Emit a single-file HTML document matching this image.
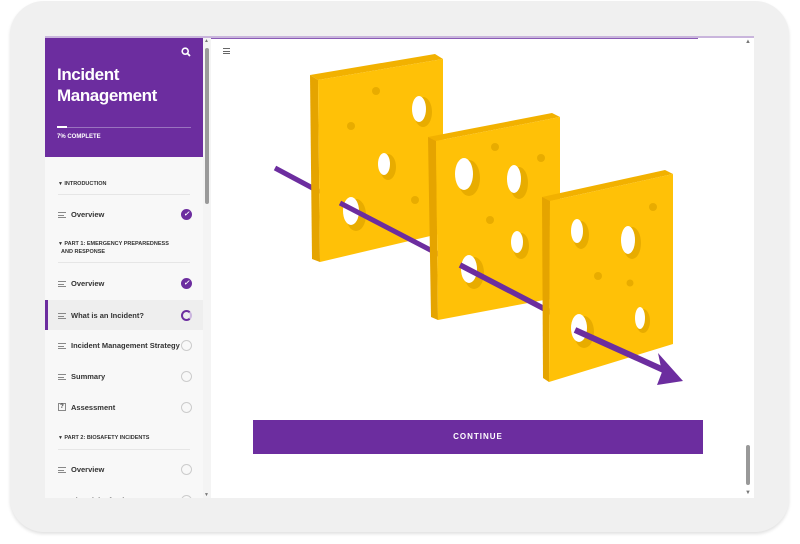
<!DOCTYPE html>
<html><head><meta charset="utf-8"><style>
*{margin:0;padding:0;box-sizing:border-box}
body{width:800px;height:544px;background:#fff;position:relative;overflow:hidden;font-family:"Liberation Sans",sans-serif}
.frame{position:absolute;left:10px;top:1px;width:779px;height:531px;background:#f0f0f0;border-radius:34px;box-shadow:0 2px 3px rgba(0,0,0,.12)}
.screen{position:absolute;left:45px;top:36px;width:709px;height:462px;background:#fff;overflow:hidden;border-top:2px solid #c9b5dc}
.side{position:absolute;left:0;top:0;width:158px;height:462px;background:#f8f8f8}
.head{position:absolute;left:0;top:-2px;width:158px;height:121px;background:#6c2d9f;color:#fff}
.head h1{position:absolute;left:12px;top:28px;font-size:17px;line-height:21px;font-weight:bold;letter-spacing:-.4px}
.head .bar{position:absolute;left:12px;top:91px;width:134px;height:1px;background:#9a73bf}
.head .bar i{position:absolute;left:0;top:-1px;width:10px;height:2px;background:#fff}
.head .pc{position:absolute;left:12px;top:98px;font-size:6px;font-weight:bold}
.sb{position:absolute;left:158px;top:0;width:8px;height:462px;background:#f4f4f4}
.sb i{position:absolute;left:2px;top:10px;width:4px;height:156px;background:#9a9a9a;border-radius:2px}
.sec{position:absolute;left:13px;font-size:5.5px;font-weight:bold;color:#333;line-height:8px}
.sec:before{content:"▼ ";font-size:5px}
.line{position:absolute;left:13px;width:132px;height:1px;background:#e6e6e6}
.it{position:absolute;left:0;width:158px;height:30px;font-size:7.5px;font-weight:bold;color:#333}
.it span{position:absolute;left:26px;top:11px}
.it .ic{position:absolute;left:13px;top:13px;width:8px;height:6px;border-top:1px solid #888;border-bottom:1px solid #888}
.it .ic:after{content:"";position:absolute;left:0;top:1.5px;width:6px;height:1px;background:#888}
.it .c{position:absolute;left:136px;top:10px;width:11px;height:11px;border-radius:50%;border:1px solid #ccc}
.it .c.d{background:#6c2d9f;border-color:#6c2d9f;color:#fff;font-size:7px;text-align:center;line-height:10px}
.it .c.p{border:2px solid #6c2d9f;border-right-color:#cbb6df}
.act{background:#eeeeee}
.act:before{content:"";position:absolute;left:0;top:0;width:3px;height:30px;background:#6c2d9f}
.content{position:absolute;left:166px;top:0;width:543px;height:462px;background:#fff}
.btn{position:absolute;left:42px;top:382px;width:450px;height:34px;background:#6c2d9f;color:#fff;font-size:8px;font-weight:bold;letter-spacing:1px;text-align:center;line-height:34px}
.csb{position:absolute;left:698px;top:0;width:11px;height:462px}
</style></head><body>
<div class="frame"></div>
<div class="screen">
 <div class="side">
  <div class="head">
   <svg style="position:absolute;left:136px;top:11px" width="10" height="10" viewBox="0 0 10 10"><circle cx="4.2" cy="4.2" r="3" fill="none" stroke="#fff" stroke-width="1.6"/><path d="M6.3 6.3L9 9" stroke="#fff" stroke-width="1.8"/></svg>
   <h1>Incident<br>Management</h1>
   <div class="bar"><i></i></div>
   <div class="pc">7% COMPLETE</div>
  </div>
  <div class="sec" style="top:142px">INTRODUCTION</div>
  <div class="line" style="top:156px"></div>
  <div class="it" style="top:161px"><i class="ic"></i><span>Overview</span><i class="c d">✓</i></div>
  <div class="sec" style="top:202px;width:130px">PART 1: EMERGENCY PREPAREDNESS<br>&nbsp;&nbsp;AND RESPONSE</div>
  <div class="line" style="top:224px"></div>
  <div class="it" style="top:230px"><i class="ic"></i><span>Overview</span><i class="c d">✓</i></div>
  <div class="it act" style="top:262px"><i class="ic"></i><span>What is an Incident?</span><i class="c p"></i></div>
  <div class="it" style="top:292px"><i class="ic"></i><span>Incident Management Strategy</span><i class="c"></i></div>
  <div class="it" style="top:323px"><i class="ic"></i><span>Summary</span><i class="c"></i></div>
  <div class="it" style="top:354px"><i style="position:absolute;left:13px;top:11px;width:8px;height:8px;border:1px solid #888;font-size:6px;line-height:6px;text-align:center;font-style:normal">?</i><span>Assessment</span><i class="c"></i></div>
  <div class="sec" style="top:396px">PART 2: BIOSAFETY INCIDENTS</div>
  <div class="line" style="top:411px"></div>
  <div class="it" style="top:416px"><i class="ic"></i><span>Overview</span><i class="c"></i></div>
  <div class="it" style="top:447px"><i class="ic"></i><span>The Risk of Lab</span><i class="c"></i></div>
 </div>
 <div class="sb"><i></i><span style="position:absolute;left:1px;top:0;font-size:5px;color:#777">▲</span><span style="position:absolute;left:1px;top:454px;font-size:5px;color:#777">▼</span></div>
 <div class="content">
  <div style="position:absolute;left:0;top:-2px;width:487px;height:3px;background:#8a5bb5"></div>
  <div style="position:absolute;left:12px;top:10px;width:7px;height:6px;border-top:1px solid #666;border-bottom:1px solid #666"><i style="position:absolute;left:0;top:1.5px;width:7px;height:1px;background:#666"></i></div>
  <div class="btn">CONTINUE</div>
 </div>
 <div class="csb"><span style="position:absolute;left:2px;top:1px;font-size:6px;color:#777">▲</span><i style="position:absolute;left:3px;top:407px;width:4px;height:40px;background:#999;border-radius:2px"></i><span style="position:absolute;left:2px;top:452px;font-size:6px;color:#777">▼</span></div>
</div>
<svg style="position:absolute;left:0;top:0" width="800" height="544" viewBox="0 0 800 544">
 <line x1="275" y1="168" x2="320" y2="192" stroke="#6c2d9f" stroke-width="5"/>
 <polygon points="310,75 435,54 443,59 318,80" fill="#f2b100"/>
 <polygon points="310,75 318,80 320,262 312,259" fill="#e5a400"/>
 <polygon points="318,80 443,59 443,233 320,262" fill="#ffc107"/>
 <g fill="#e8ac00"><circle cx="376" cy="91" r="4"/><circle cx="351" cy="126" r="4"/><circle cx="415" cy="200" r="4"/>
 <ellipse cx="423" cy="112" rx="9" ry="15"/><ellipse cx="388" cy="167" rx="8" ry="13"/><ellipse cx="356" cy="215" rx="10" ry="16"/></g>
 <g fill="#fff"><ellipse cx="419" cy="109" rx="7" ry="13"/><ellipse cx="384" cy="164" rx="6" ry="11"/><ellipse cx="351" cy="211" rx="8" ry="14"/></g>
 <line x1="340" y1="203" x2="440" y2="255" stroke="#6c2d9f" stroke-width="5"/>
 <polygon points="428,137 552,113 560,117 436,141" fill="#f2b100"/>
 <polygon points="428,137 436,141 438,320 431,317" fill="#e5a400"/>
 <polygon points="436,141 560,117 560,297 438,320" fill="#ffc107"/>
 <g fill="#e8ac00"><circle cx="495" cy="147" r="4"/><circle cx="541" cy="158" r="4"/><circle cx="490" cy="220" r="4"/>
 <ellipse cx="469" cy="178" rx="11" ry="18"/><ellipse cx="519" cy="183" rx="9" ry="16"/><ellipse cx="521" cy="246" rx="8" ry="13"/><ellipse cx="474" cy="273" rx="10" ry="16"/></g>
 <g fill="#fff"><ellipse cx="464" cy="174" rx="9" ry="16"/><ellipse cx="514" cy="179" rx="7" ry="14"/><ellipse cx="517" cy="242" rx="6" ry="11"/><ellipse cx="469" cy="269" rx="8" ry="14"/></g>
 <line x1="460" y1="265" x2="560" y2="317" stroke="#6c2d9f" stroke-width="5.5"/>
 <polygon points="542,197 665,170 673,174 550,201" fill="#f2b100"/>
 <polygon points="542,197 550,201 549,382 543,378" fill="#e5a400"/>
 <polygon points="550,201 673,174 673,344 549,382" fill="#ffc107"/>
 <g fill="#e8ac00"><circle cx="653" cy="207" r="4"/><circle cx="598" cy="276" r="4"/><circle cx="630" cy="283" r="3.5"/>
 <ellipse cx="581" cy="235" rx="8" ry="14"/><ellipse cx="632" cy="243" rx="9" ry="16"/><ellipse cx="643" cy="321" rx="7" ry="12"/><ellipse cx="584" cy="332" rx="10" ry="16"/></g>
 <g fill="#fff"><ellipse cx="577" cy="231" rx="6" ry="12"/><ellipse cx="628" cy="240" rx="7" ry="14"/><ellipse cx="640" cy="318" rx="5" ry="11"/><ellipse cx="579" cy="328" rx="8" ry="14"/></g>
 <line x1="575" y1="330" x2="668" y2="372" stroke="#6c2d9f" stroke-width="6"/>
 <polygon points="658,353 683,381 657,385 662,372" fill="#6c2d9f"/>
</svg>
</body></html>
